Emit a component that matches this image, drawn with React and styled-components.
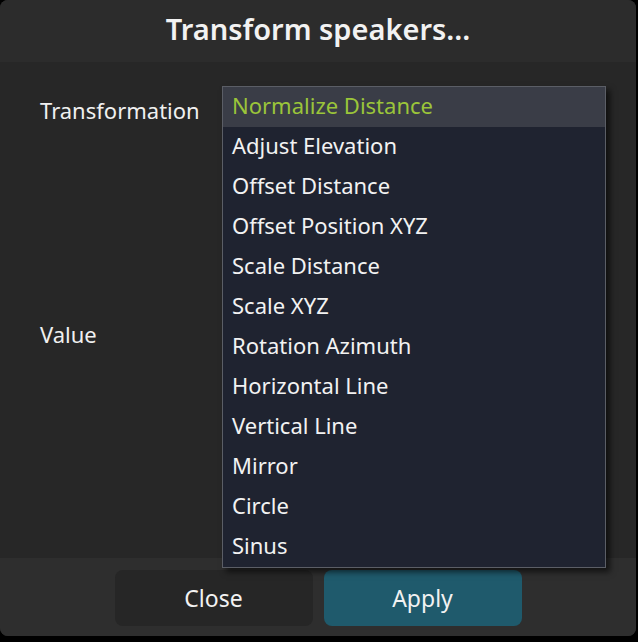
import styled, { createGlobalStyle } from 'styled-components';

const GlobalStyle = createGlobalStyle`
  html, body { margin: 0; padding: 0; background: #000; }
  body { font-family: "Noto Sans", "Open Sans", sans-serif; }
`;

const options = [
  'Normalize Distance',
  'Adjust Elevation',
  'Offset Distance',
  'Offset Position XYZ',
  'Scale Distance',
  'Scale XYZ',
  'Rotation Azimuth',
  'Horizontal Line',
  'Vertical Line',
  'Mirror',
  'Circle',
  'Sinus',
];

const App = () => {
  return (
    <>
      <GlobalStyle />
      <Page>
        <Window>
          <Header>Transform speakers...</Header>
          <Body>
            <Row $height={224}>
              <Label>Transformation</Label>
              <Field>
                <Menu>
                  {options.map((opt, i) => (
                    <Option key={opt} $selected={i === 0}>{opt}</Option>
                  ))}
                </Menu>
              </Field>
            </Row>
            <Row $height={220}>
              <Label>Value</Label>
              <Field />
            </Row>
          </Body>
          <Footer>
            <Button>Close</Button>
            <Button $primary>Apply</Button>
          </Footer>
        </Window>
      </Page>
    </>
  );
};

const Page = styled.div`
  width: 638px;
  height: 642px;
  background: #000;
  overflow: hidden;
`;

const Window = styled.div`
  width: 636px;
  height: 636px;
  background: #2c2c2c;
  border-radius: 8px;
  display: flex;
  flex-direction: column;
  overflow: hidden;
`;

const Header = styled.div`
  height: 62px;
  flex-shrink: 0;
  display: flex;
  align-items: center;
  justify-content: center;
  color: #f2f2f2;
  font-size: 29px;
  font-weight: 600;
  background: #2c2c2c;
  padding-bottom: 6px;
  box-sizing: border-box;
`;

const Body = styled.div`
  flex: 1;
  background: #272727;
  padding: 26px 0 0 40px;
  display: flex;
  flex-direction: column;
  position: relative;
`;

const Row = styled.div`
  display: grid;
  grid-template-columns: 182px 384px;
  height: ${(p) => p.$height}px;
  flex-shrink: 0;
  align-items: start;
`;

const Label = styled.div`
  color: #f0f0f0;
  font-size: 22px;
  line-height: 44px;
`;

const Field = styled.div`
  position: relative;
`;

const Menu = styled.div`
  position: absolute;
  left: 0;
  top: -2px;
  width: 384px;
  background: #1f2330;
  border: 1px solid #5b5e66;
  box-sizing: border-box;
  box-shadow: 4px 4px 6px rgba(0, 0, 0, 0.6);
  z-index: 2;
`;

const Option = styled.div`
  height: 40px;
  line-height: 36px;
  padding-left: 9px;
  font-size: 22px;
  white-space: nowrap;
  color: ${(p) => (p.$selected ? '#9bc53a' : '#f2f2f2')};
  background: ${(p) => (p.$selected ? '#3a3d47' : 'transparent')};
`;

const Footer = styled.div`
  height: 78px;
  flex-shrink: 0;
  background: #2e2e2e;
  display: flex;
  justify-content: center;
  gap: 11px;
  padding-top: 12px;
  box-sizing: border-box;
`;

const Button = styled.button`
  width: 198px;
  height: 56px;
  border: none;
  border-radius: 8px;
  font-family: inherit;
  font-size: 23px;
  color: #f2f2f2;
  background: ${(p) => (p.$primary ? '#1f5a6c' : '#262626')};
`;

export default App;
